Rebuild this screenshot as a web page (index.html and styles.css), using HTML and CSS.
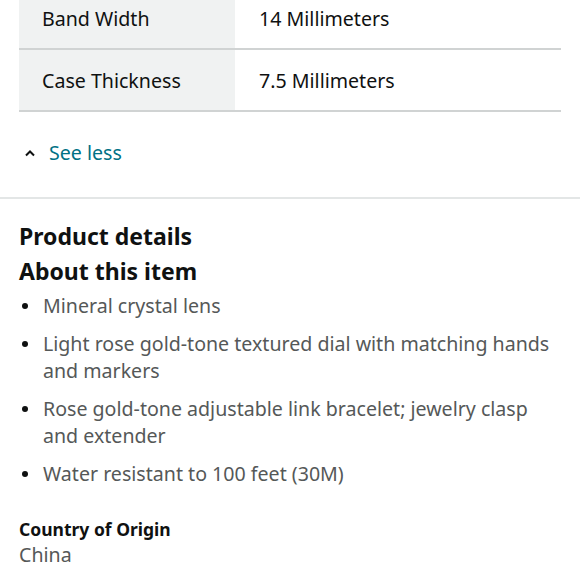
FILE: index.html
```html
<!DOCTYPE html>
<html>
<head>
<meta charset="utf-8">
<link rel="stylesheet" href="styles.css">
</head>
<body>
<div class="specs">
  <div class="row">
    <div class="key">Band Width</div>
    <div class="val">14 Millimeters</div>
  </div>
  <div class="row">
    <div class="key">Case Thickness</div>
    <div class="val">7.5 Millimeters</div>
  </div>
</div>
<div class="toggle">
  <svg class="chev" width="12" height="8" viewBox="0 0 12 8"><path d="M2 6.5 L6 2.5 L10 6.5" fill="none" stroke="#0f1111" stroke-width="2"/></svg>
  <span class="link">See less</span>
</div>
<div class="details">
  <h2 class="title">Product details</h2>
  <h2 class="title">About this item</h2>
  <ul class="bullets">
    <li>Mineral crystal lens</li>
    <li>Light rose gold-tone textured dial with matching hands and markers</li>
    <li>Rose gold-tone adjustable link bracelet; jewelry clasp and extender</li>
    <li>Water resistant to 100 feet (30M)</li>
  </ul>
  <div class="origin">
    <div class="origin-label">Country of Origin</div>
    <div class="origin-val">China</div>
  </div>
</div>
</body>
</html>
```
FILE: styles.css
```css
html, body {
  margin: 0;
  padding: 0;
  background: #ffffff;
}
body {
  font-family: "Noto Sans", "Open Sans", sans-serif;
  color: #0f1111;
  width: 580px;
  overflow: hidden;
}
.specs {
  margin: -12px 19px 0 19px;
}
.row {
  display: flex;
  height: 60px;
  border-bottom: 2px solid #d0d3d3;
}
.key {
  width: 193px;
  padding-left: 23px;
  background: #f0f2f2;
  display: flex;
  align-items: center;
  font-size: 19.6px;
}
.val {
  flex: 1;
  padding-left: 24px;
  display: flex;
  align-items: center;
  font-size: 19.6px;
}
.toggle {
  display: flex;
  align-items: center;
  height: 81px;
  padding-bottom: 4px;
  padding-left: 24px;
  border-bottom: 2px solid #e3e6e6;
}
.chev {
  margin-right: 13px;
}
.link {
  color: #007185;
  font-size: 19.6px;
}
.details {
  padding: 20px 19px 0 19px;
}
.title {
  margin: 0;
  font-size: 23px;
  font-weight: 700;
  line-height: 35px;
}
.bullets {
  list-style: none;
  margin: 3px 0 0 0;
  padding: 0;
}
.bullets li {
  position: relative;
  padding-left: 24px;
  font-size: 19.6px;
  line-height: 27px;
  color: #555858;
  margin-bottom: 11px;
}
.bullets li::before {
  content: "";
  position: absolute;
  left: 3px;
  top: 11px;
  width: 6px;
  height: 6px;
  border-radius: 50%;
  background: #0f1111;
}
.origin {
  margin-top: 29px;
}
.origin-label {
  font-size: 17.5px;
  font-weight: 700;
  line-height: 26px;
}
.origin-val {
  font-size: 19.6px;
  line-height: 26px;
  color: #555858;
}
```
